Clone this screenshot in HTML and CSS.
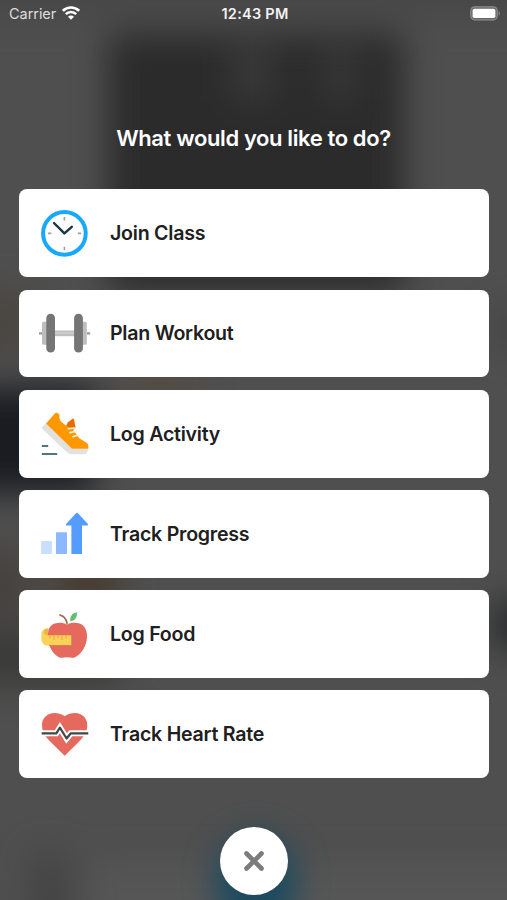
FILE: index.html
```html
<!DOCTYPE html>
<html lang="en">
<head>
<meta charset="utf-8">
<title>What would you like to do?</title>
<link rel="stylesheet" href="styles.css">
</head>
<body>
<div class="screen">
  <svg class="backdrop" viewBox="0 0 507 900" aria-hidden="true">
    <defs>
      <filter id="soft" filterUnits="userSpaceOnUse" x="-80" y="-80" width="667" height="1060" color-interpolation-filters="sRGB"><feGaussianBlur stdDeviation="17"/></filter>
      <filter id="glow" filterUnits="userSpaceOnUse" x="100" y="700" width="320" height="320" color-interpolation-filters="sRGB"><feGaussianBlur stdDeviation="15"/></filter>
    </defs>
    <rect width="507" height="900" fill="#4f4f4f"/>
    <g filter="url(#soft)">
      <rect x="-80" y="-80" width="667" height="95" fill="#474747"/>
      <rect x="108" y="33" width="296" height="258" fill="#2b2b2b"/>
      <rect x="232" y="45" width="40" height="55" fill="#3a3a3a"/>
      <rect x="325" y="50" width="30" height="50" fill="#3a3a3a"/>
      <rect x="-80" y="290" width="115" height="65" fill="#4a4742"/>
      <rect x="-80" y="388" width="175" height="104" fill="#1a1c22"/>
      <rect x="125" y="368" width="70" height="28" fill="#554b40"/>
      <rect x="-80" y="550" width="110" height="70" fill="#46423e"/>
      <rect x="55" y="568" width="65" height="30" fill="#453425"/>
      <rect x="-80" y="630" width="200" height="54" fill="#3a3a39"/>
      <rect x="492" y="600" width="95" height="50" fill="#2a2b2d"/>
      <rect x="492" y="315" width="95" height="30" fill="#434343"/>
      <rect x="35" y="855" width="30" height="125" fill="#414141"/>
      <rect x="90" y="865" width="497" height="115" fill="#565656"/>
    </g>
    <ellipse cx="256" cy="882" rx="41" ry="48" fill="#1c4a60" filter="url(#glow)"/>
  </svg>

  <header class="status">
    <div class="carrier">
      <span>Carrier</span>
      <svg class="wifi" viewBox="0 0 18 14">
        <path d="M.9 4.8a11.5 11.5 0 0 1 16.2 0" fill="none" stroke="#fff" stroke-width="2.6"/>
        <path d="M3.8 8.1a7.3 7.3 0 0 1 10.4 0" fill="none" stroke="#fff" stroke-width="2.5"/>
        <path d="M9 13.8 6 10.8a4.1 4.1 0 0 1 6 0z" fill="#fff"/>
      </svg>
    </div>
    <span class="time">12:43 PM</span>
    <svg class="battery" viewBox="0 0 31 15">
      <rect x=".8" y=".8" width="26.4" height="13" rx="3.8" fill="#666" stroke="#8c8c8c" stroke-width="1.2"/>
      <rect x="2.6" y="2.8" width="22.8" height="9.2" rx="1.8" fill="#fff"/>
      <path d="M28.6 5a2.8 2.8 0 0 1 0 4.6z" fill="#8c8c8c"/>
    </svg>
  </header>

  <h1 class="title">What would you like to do?</h1>

  <main class="menu">
    <button class="card">
      <svg class="icon" viewBox="0 0 60 60">
        <circle cx="29.4" cy="29.4" r="21.3" fill="#fff" stroke="#18a9fa" stroke-width="4"/>
        <path d="M29.4 13v3.4M29.4 42.8v3.4M13 29.4h3.4M42.8 29.4h3.4" stroke="#a0a0a0" stroke-width="1.6"/>
        <path d="m19 19 10.4 10.4 7.4-6.6" fill="none" stroke="#183542" stroke-width="2.4" stroke-linecap="round" stroke-linejoin="round"/>
      </svg>
      <span>Join Class</span>
    </button>
    <button class="card">
      <svg class="icon" viewBox="0 0 60 60">
        <path d="M4 28.2h3v2.4H4zM52 28.2h3.2v2.4H52z" fill="#999"/>
        <rect x="18" y="26.5" width="23" height="5.7" fill="#bebebe"/>
        <path d="M18 28h23v2H18z" fill="#cbcbcb"/>
        <rect x="7" y="17.8" width="8" height="23" rx="1.5" fill="#bdbdbd"/>
        <rect x="44" y="17.8" width="7.8" height="23" rx="1.5" fill="#bdbdbd"/>
        <rect x="11.3" y="9.8" width="8.7" height="38.8" rx="4.3" fill="#757575"/>
        <rect x="39.1" y="9.8" width="8.8" height="38.8" rx="4.3" fill="#757575"/>
      </svg>
      <span>Plan Workout</span>
    </button>
    <button class="card">
      <svg class="icon" viewBox="0 0 60 60">
        <path d="M11 19.6 7.2 22.7q-1 .9 0 2.1l24 22.6q3 2.9 6.5 2.9h11.1q4.2 0 4.2-5.5H37z" fill="#e1e1e1"/>
        <path d="m31 22 2-3.8 5-3.8q.8 0 1 1l1.6 8.4-5 4z" fill="#e66c00"/>
        <path d="M11 19.6 20.3 9q1-.9 2 0l2.2 1.5-.1 3.2q.2 2.8 2.3 4.5l5 4 5 1.6 7.5 10.4 7.5 4.5q2.2 1.7 1.6 6.1H37z" fill="#ff9800"/>
        <path d="M33.3 24.8 39.5 24M35 28.6l6.5-1.3M37.8 32.7l5.8-1.7" stroke="#fff1dc" stroke-width="1.6" stroke-linecap="round"/>
        <path d="M6.8 42h6.4M6.8 50h15.4" stroke="#55767e" stroke-width="1.8"/>
      </svg>
      <span>Log Activity</span>
    </button>
    <button class="card">
      <svg class="icon" viewBox="0 0 60 60">
        <rect x="6.1" y="37.1" width="11" height="13" rx=".5" fill="#c8dfff"/>
        <rect x="21" y="28.2" width="11" height="21.9" rx=".5" fill="#8bb8ff"/>
        <path d="M41.2 9.1q.8-.7 1.6 0L52.9 20q.7 1.4-.7 1.6H47v28.5H36.4V21.6h-4.6q-1.5-.2-.7-1.6z" fill="#559cff"/>
      </svg>
      <span>Track Progress</span>
    </button>
    <button class="card">
      <svg class="icon" viewBox="0 0 60 60">
        <path d="M32 19.5c-3.5-2-8.6-2-12.2-.9-5.5 1.8-7.5 7.4-7.1 14 .5 8.2 4.9 16.7 11.2 19.7 2.7 1.1 5 .1 8.1 0 3.1.1 5.4 1.1 8.1 0 6.5-3 11.4-11.4 11.9-19.7.4-6.6-2-12.2-7.6-14-3.6-1.1-8.9-1.1-12.4.9z" fill="#e6695d"/>
        <path d="M24.4 9.8c4.3 1 7.1 4.3 7.8 9" fill="none" stroke="#a56a4b" stroke-width="1.8"/>
        <path d="M35.4 16.2c-.8-5 2-8.3 6.5-9 .5 4.6-1.6 8.7-6.5 9z" fill="#64bd72"/>
        <path d="M13 23.2c-4.3 0-6.7 2.4-6.7 6v4c0 4.5 2.8 7.4 7 7.4h23V30.2H12.6z" fill="#fbd158"/>
        <path d="M9 27q0-3.3 4.2-3.3h.6l-1 6.5q-3.8 0-3.8-3.2z" fill="#eab44b"/>
        <path d="M15 30.2v3.4M19 30.2V35M23 30.2v3.4M27 30.2V35M31 30.2v3.4" stroke="#e8a946" stroke-width="1.1"/>
        <path d="M13.8 40.6h22.5" stroke="#ce6d4c" stroke-width=".7"/>
      </svg>
      <span>Log Food</span>
    </button>
    <button class="card">
      <svg class="icon" viewBox="0 0 60 60">
        <path d="M29.7 11.2C26.5 8.8 23 8 19.4 8 12.3 8 7 13 7 20c0 7.5 3.8 12.2 9.2 17.4L29.7 50.7l13.4-13.3C48.5 32.2 52.3 27.5 52.3 20c0-7-5.3-12-12.4-12-3.6 0-7.1.8-10.2 3.2z" fill="#e6695d"/>
        <path d="M5 28.3h16.3l3.6-5.6 6.7 10.8 4.2-5.2H55" fill="none" stroke="#fff" stroke-width="6"/>
        <path d="M6.7 28.3h14.6l3.6-5.6 6.7 10.8 4.2-5.2h17.5" fill="none" stroke="#414747" stroke-width="2.2" stroke-linejoin="round"/>
      </svg>
      <span>Track Heart Rate</span>
    </button>
  </main>

  <button class="close" aria-label="Close">
    <svg viewBox="0 0 24 24"><path d="m4.5 4.5 15 15m0-15-15 15" stroke="#7c7c7c" stroke-width="4.6" stroke-linecap="round"/></svg>
  </button>
</div>
</body>
</html>
```
FILE: styles.css
```css
* { box-sizing: border-box; }
body { margin: 0; font-family: Inter, "Liberation Sans", sans-serif; }
button { border: 0; padding: 0; font: inherit; cursor: pointer; }
.screen {
  position: relative;
  width: 507px;
  height: 900px;
  overflow: hidden;
  display: flex;
  flex-direction: column;
  isolation: isolate;
}
.backdrop { position: absolute; inset: 0; width: 100%; height: 100%; z-index: -1; }
.status {
  height: 28px;
  padding: 0 6px 2px 9px;
  display: grid;
  grid-template-columns: 1fr auto 1fr;
  align-items: center;
  color: #fff;
}
.carrier { display: flex; align-items: center; gap: 6px; font-size: 14.5px; color: #dedede; letter-spacing: -0.05px; }
.wifi { width: 18px; height: 14px; }
.time { font-size: 14.5px; font-weight: 600; color: #f2f2f2; letter-spacing: 0.25px; }
.battery { width: 31px; height: 15px; justify-self: end; margin-top: 1px; }
.title {
  margin: 94px 0 0;
  height: 32px;
  line-height: 32px;
  text-align: center;
  font-size: 22px;
  font-weight: 600;
  letter-spacing: -0.38px;
  color: #fff;
}
.menu { margin: 35.4px 18px 0 19.3px; display: flex; flex-direction: column; gap: 12.4px; }
.card {
  display: flex;
  align-items: center;
  gap: 15px;
  height: 87.8px;
  padding-left: 15.7px;
  border-radius: 8px;
  background: #fff;
  color: #202020;
  font-size: 19.6px;
  font-weight: 600;
  letter-spacing: -0.25px;
}
.icon { width: 60px; height: 60px; flex: none; margin-top: 1px; }
.close {
  width: 68px;
  height: 68px;
  margin: 49px auto 0;
  flex: none;
  border-radius: 50%;
  background: #fff;
  display: grid;
  place-items: center;
}
.close svg { width: 24px; height: 24px; }
```
